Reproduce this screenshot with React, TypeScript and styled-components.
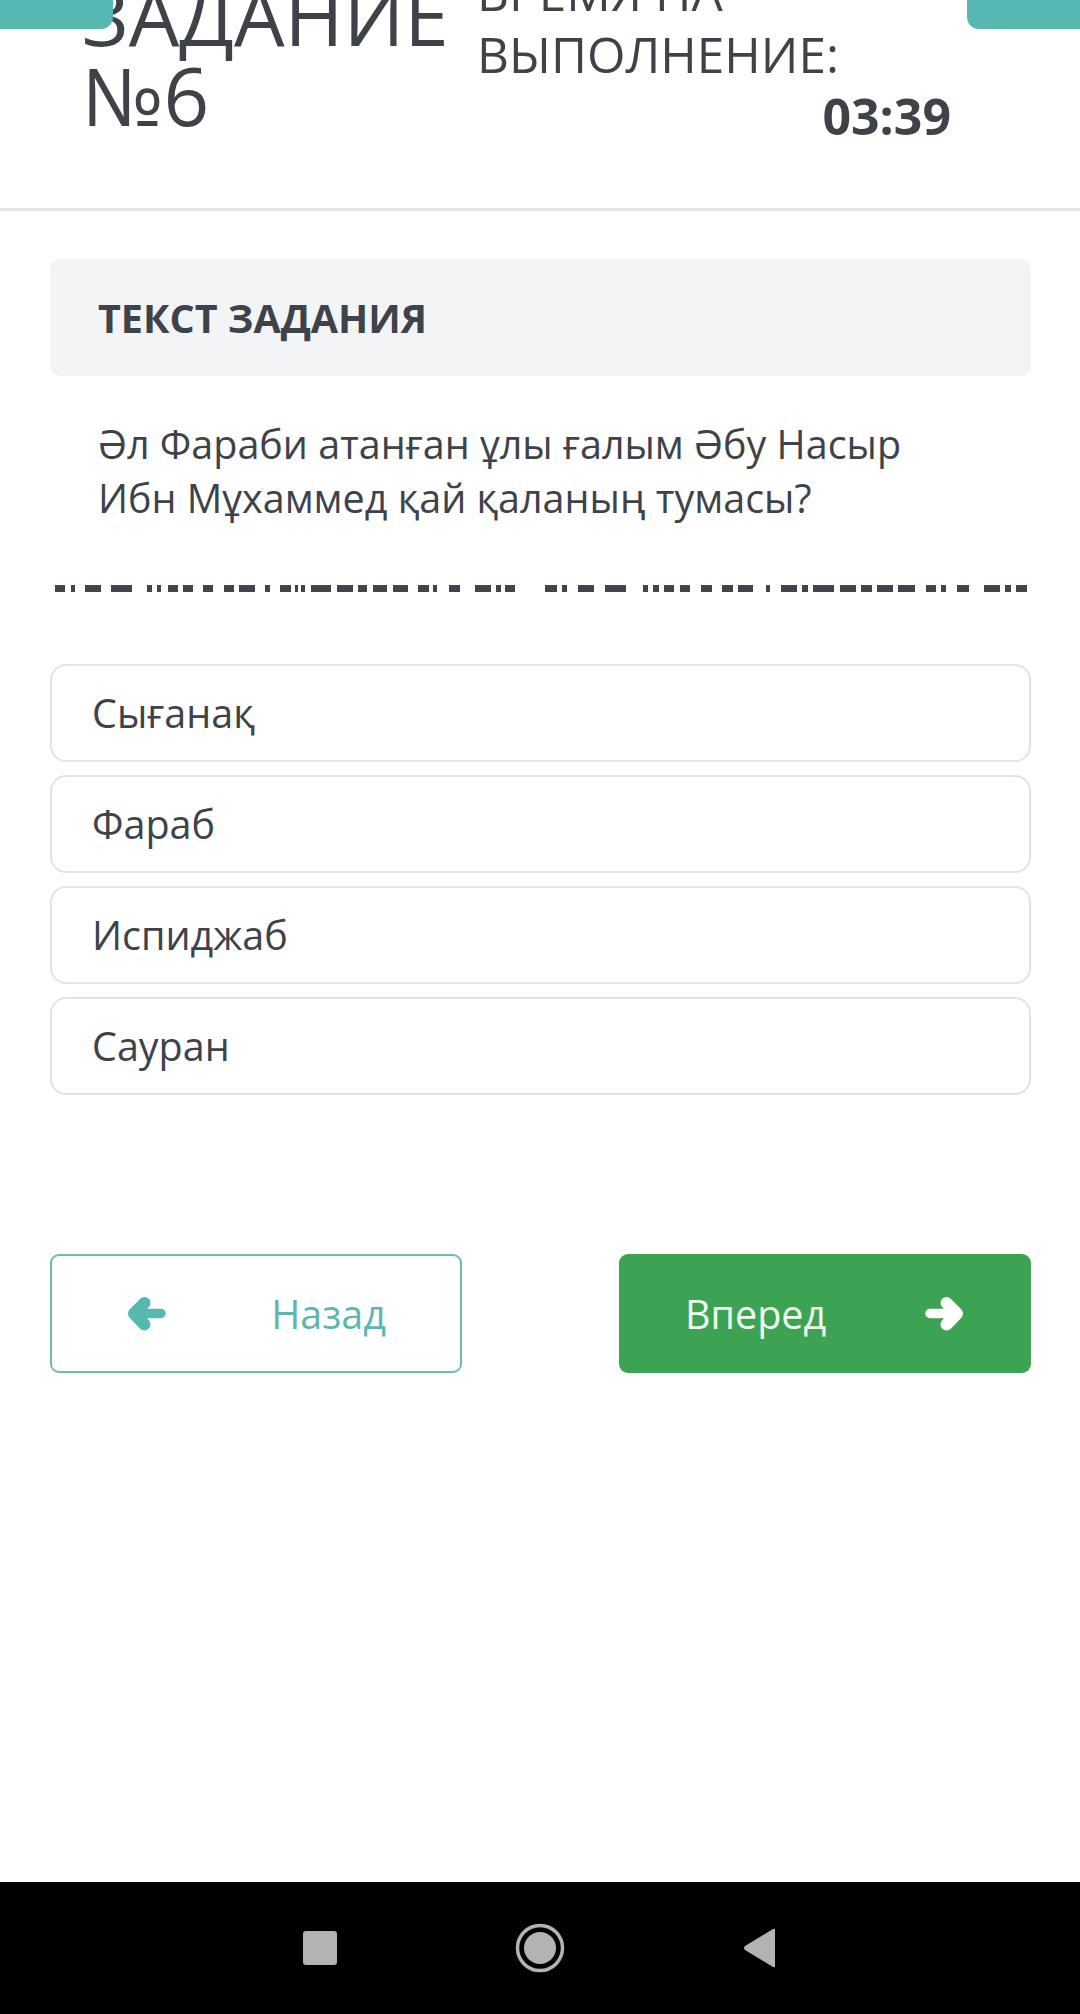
import styled, { createGlobalStyle } from "styled-components";

const GlobalStyle = createGlobalStyle`
  html, body {
    margin: 0;
    padding: 0;
    background: #ffffff;
  }
  body {
    font-family: "Open Sans", "Noto Sans", sans-serif;
    color: #3e434a;
  }
  * {
    box-sizing: border-box;
  }
`;

const Page = styled.div`
  width: 1080px;
  min-height: 2014px;
  display: flex;
  flex-direction: column;
  overflow: hidden;
`;

// header (scrolled a bit, top is cut off)
const Header = styled.header`
  position: relative;
  height: 211px;
  border-bottom: 3px solid #e4e4e4;
  padding-left: 82px;
`;

const HeaderRow = styled.div`
  display: flex;
  align-items: flex-start;
  margin-top: -39px;
`;

const Tab = styled.div<{ side: "left" | "right" }>`
  position: absolute;
  top: 0;
  ${({ side }) => (side === "left" ? "left: 0;" : "right: 0;")}
  width: 113px;
  height: 29px;
  background: #56b8b1;
  border-bottom-${({ side }) => (side === "left" ? "right" : "left")}-radius: 12px;
  z-index: 2;
`;

const TaskTitle = styled.h1`
  flex: 0 0 395px;
  margin: 14px 0 0;
  font-size: 80px;
  line-height: 80px;
  font-weight: 400;
  color: #3e434a;
`;

const TimerBox = styled.div`
  width: 474px;
  font-size: 49.5px;
  line-height: 62px;
`;

const TimerValue = styled.div`
  text-align: right;
  font-size: 50px;
  font-weight: 700;
`;

// body
const Content = styled.main`
  padding: 48px 49px 0 50px;
`;

const TaskHead = styled.div`
  height: 117px;
  display: flex;
  align-items: center;
  padding-left: 48px;
  background: #f3f4f6;
  border-radius: 10px;
  font-size: 39.5px;
  font-weight: 700;
`;

const Question = styled.p`
  margin: 41px 0 0;
  padding-left: 48px;
  max-width: 920px;
  font-size: 39.5px;
  line-height: 54px;
`;

const Dashes = styled.svg`
  display: block;
  margin: 60px 0 0 -50px;
`;

const Options = styled.div`
  display: flex;
  flex-direction: column;
  gap: 13px;
  margin-top: 71px;
`;

const Option = styled.div`
  height: 98px;
  display: flex;
  align-items: center;
  padding-left: 40px;
  border: 2px solid #e2e3e5;
  border-radius: 16px;
  font-size: 39.5px;
`;

const NavRow = styled.div`
  display: flex;
  justify-content: space-between;
  margin-top: 159px;
`;

const NavButton = styled.button<{ variant: "back" | "next" }>`
  width: 412px;
  height: 119px;
  display: flex;
  align-items: center;
  justify-content: space-between;
  border-radius: 9px;
  font-family: "Open Sans", "Noto Sans", sans-serif;
  font-size: 39.5px;
  cursor: pointer;
  ${({ variant }) =>
    variant === "back"
      ? `
    padding: 0 74px 0 75px;
    background: #ffffff;
    color: #5fb6b1;
    border: 2px solid #6fb9b4;
  `
      : `
    padding: 0 67px 0 66px;
    background: #3ca353;
    color: #eefaf0;
    border: none;
  `}
`;

const Arrow = styled.svg<{ flip?: boolean }>`
  display: block;
  transform: ${({ flip }) => (flip ? "scaleX(-1)" : "none")};
`;

const SystemBar = styled.nav`
  margin-top: auto;
  height: 132px;
  background: #000000;
  display: flex;
  align-items: center;
  justify-content: center;
`;

const SysSlot = styled.div`
  width: 220px;
  display: flex;
  justify-content: center;
`;

const firstRun: [number, number][] = [
  [55, 65], [71, 75], [85, 101], [111, 132], [147, 152], [157, 161], [168, 178], [183, 193],
  [203, 213], [224, 234], [239, 255], [265, 270], [280, 291], [295, 298], [301, 305], [311, 331],
  [337, 353], [358, 367], [373, 387], [393, 408], [418, 429], [433, 437], [449, 460], [475, 491],
  [496, 501], [505, 515],
];

const secondRun: [number, number][] = [
  [545, 557], [562, 567], [578, 594], [605, 626], [643, 648], [653, 659], [664, 674], [680, 690],
  [701, 712], [722, 733], [738, 753], [766, 770], [781, 797], [802, 808], [813, 834], [840, 856],
  [861, 872], [877, 893], [898, 915], [926, 936], [941, 946], [957, 969], [984, 1000], [1005, 1011],
  [1016, 1027],
];

const answers = ["Сығанақ", "Фараб", "Испиджаб", "Сауран"];

function ArrowIcon({ color, flip }: { color: string; flip?: boolean }) {
  return (
    <Arrow flip={flip} width="40" height="36" viewBox="0 0 40 36">
      <path
        d="M17.5 7 L7 17.5 L17.5 28.5"
        fill="none"
        stroke={color}
        strokeWidth="12"
        strokeLinecap="round"
        strokeLinejoin="round"
      />
      <path d="M8 17.5 H34" stroke={color} strokeWidth="9.5" strokeLinecap="round" />
    </Arrow>
  );
}

export default function App() {
  return (
    <Page>
      <GlobalStyle />
      <Header>
        <Tab side="left" />
        <Tab side="right" />
        <HeaderRow>
          <TaskTitle>
            ЗАДАНИЕ
            <br />
            №6
          </TaskTitle>
          <TimerBox>
            <div>ВРЕМЯ НА</div>
            <div>ВЫПОЛНЕНИЕ:</div>
            <TimerValue>03:39</TimerValue>
          </TimerBox>
        </HeaderRow>
      </Header>

      <Content>
        <TaskHead>ТЕКСТ ЗАДАНИЯ</TaskHead>
        <Question>
          Әл Фараби атанған ұлы ғалым Әбу Насыр Ибн Мұхаммед қай қаланың тумасы?
        </Question>

        <Dashes width="1080" height="8" viewBox="0 0 1080 8">
          {[...firstRun, ...secondRun].map(([a, b]) => (
            <rect key={a} x={a} y={0} width={b - a} height={7} fill="#3f454c" />
          ))}
        </Dashes>

        <Options>
          {answers.map((a) => (
            <Option key={a}>{a}</Option>
          ))}
        </Options>

        <NavRow>
          <NavButton variant="back">
            <ArrowIcon color="#57b8b1" />
            <span>Назад</span>
          </NavButton>
          <NavButton variant="next">
            <span>Вперед</span>
            <ArrowIcon color="#ffffff" flip />
          </NavButton>
        </NavRow>
      </Content>

      <SystemBar>
        <SysSlot>
          <svg width="36" height="36" viewBox="0 0 36 36">
            <rect x="1" y="1" width="34" height="34" rx="3" fill="#b3b3b3" />
          </svg>
        </SysSlot>
        <SysSlot>
          <svg width="52" height="52" viewBox="0 0 52 52">
            <circle cx="26" cy="26" r="22.5" fill="none" stroke="#b3b3b3" strokeWidth="3.5" />
            <circle cx="26" cy="26" r="16" fill="#b3b3b3" />
          </svg>
        </SysSlot>
        <SysSlot>
          <svg width="36" height="40" viewBox="0 0 36 40">
            <path d="M33 2 L33 38 Q33 40 31 39 L3 22 Q1 20 3 18 L31 1 Q33 0 33 2 Z" fill="#b3b3b3" />
          </svg>
        </SysSlot>
      </SystemBar>
    </Page>
  );
}
